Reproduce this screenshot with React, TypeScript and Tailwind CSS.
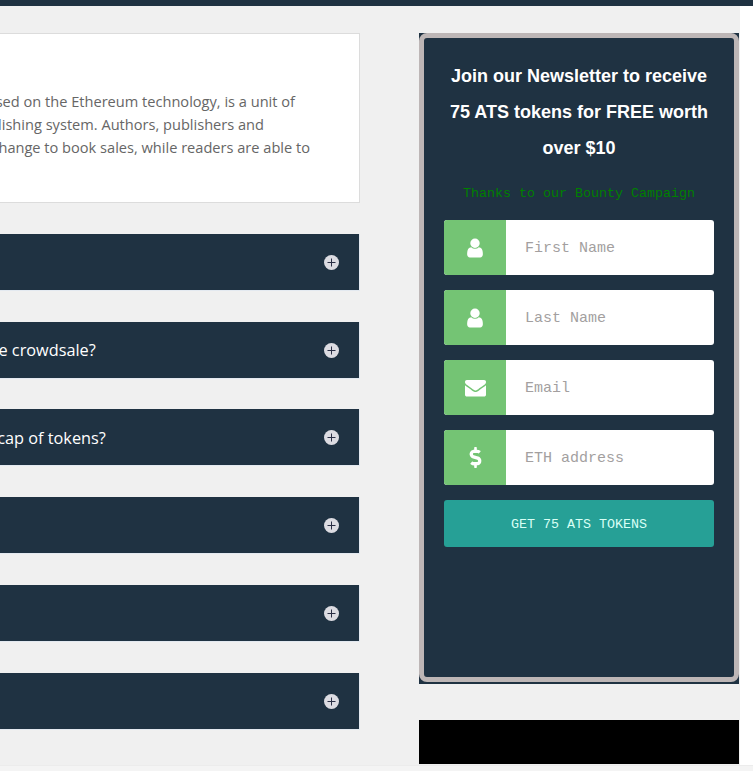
import { FaDollarSign } from "react-icons/fa";

const faqs = [
  { title: "", titleClass: "" },
  { title: "How long is the crowdsale?", titleClass: "ml-[-109px]" },
  { title: "What is the hard cap of tokens?", titleClass: "ml-[-132px]" },
  { title: "", titleClass: "" },
  { title: "", titleClass: "" },
  { title: "", titleClass: "" },
];

const UserIcon = () => (
  <svg width="22" height="22" viewBox="0 0 1792 1792" fill="currentColor">
    <path d="M1536 1399q0 109-62.5 187t-150.5 78h-854q-88 0-150.5-78t-62.5-187q0-85 8.5-160.5t31.5-152 58.5-131 94-89 134.5-34.5q131 128 313 128t313-128q76 0 134.5 34.5t94 89 58.5 131 31.5 152 8.5 160.5zm-256-887q0 159-112.5 271.5t-271.5 112.5-271.5-112.5-112.5-271.5 112.5-271.5 271.5-112.5 271.5 112.5 112.5 271.5z" />
  </svg>
);

const MailIcon = () => (
  <svg width="21" height="21" viewBox="0 0 1792 1792" fill="currentColor">
    <path d="M1792 710v794q0 66-47 113t-113 47h-1472q-66 0-113-47t-47-113v-794q44 49 101 87 362 246 497 345 57 42 92.5 65.5t94.5 48 110 24.5h2q51 0 110-24.5t94.5-48 92.5-65.5q170-123 498-345 57-39 100-87zm0-294q0 79-49 151t-122 123q-376 261-468 325-10 7-42.5 30.5t-54 38-52 32.5-57.5 27-50 9h-2q-23 0-50-9t-57.5-27-52-32.5-54-38-42.5-30.5q-91-64-262-182.5t-205-142.5q-62-42-117-115.5t-55-136.5q0-78 41.5-130t118.5-52h1472q65 0 112.5 45t47.5 115z" />
  </svg>
);

const fields = [
  { icon: <UserIcon />, placeholder: "First Name" },
  { icon: <UserIcon />, placeholder: "Last Name" },
  { icon: <MailIcon />, placeholder: "Email" },
  { icon: <FaDollarSign className="text-[21px]" />, placeholder: "ETH address" },
];

const PlusIcon = () => (
  <svg width="15" height="15" viewBox="0 0 15 15" className="shrink-0">
    <circle cx="7.5" cy="7.5" r="7.5" fill="#dcdce2" />
    <path d="M3.5 7.5h8M7.5 3.5v8" stroke="#2a2f45" strokeWidth="1" />
  </svg>
);

const App = () => {
  return (
    <div className="min-h-[771px] bg-white font-['Open_Sans',sans-serif]">
      <div className="h-[6px] bg-[#1f3242]" />

      <div className="flex h-[759px] w-[740px] items-start bg-[#f0f0f0] pt-[27px]">
        <div className="w-[360px] shrink-0 overflow-hidden">
          <div className="ml-[-10px] flex h-[170px] flex-col items-end justify-center border border-[#dcdcdc] bg-white pt-[12px] text-[14.6px] leading-[23px] text-[#666666] whitespace-nowrap">
            <p className="pr-[64px]">The ATS token, based on the Ethereum technology, is a unit of</p>
            <p className="pr-[95px]">value in a decentralised publishing system. Authors, publishers and</p>
            <p className="pr-[49px]">partners receive tokens in exchange to book sales, while readers are able to</p>
          </div>

          <div className="mt-[31px] flex flex-col gap-[30.74px]">
            {faqs.map((faq, i) => (
              <div
                key={i}
                className="flex h-[57px] items-center justify-between border-r border-b border-[#e3e9f0] bg-[#1f3242] pt-[1px] pr-[20px] text-[16.3px] text-white whitespace-nowrap"
              >
                <span className={faq.titleClass}>{faq.title}</span>
                <PlusIcon />
              </div>
            ))}
          </div>
        </div>

        <div className="ml-[59px] w-[320px] shrink-0">
          <div className="h-[651px] bg-[#1f3242]">
            <div className="h-[649px] rounded-[8px] border-[5px] border-[#bdb6b6] bg-[#1f3242] px-[20px] pt-[20px]">
              <h3 className="text-center font-['Liberation_Sans',sans-serif] text-[18px] font-bold leading-[36px] text-white">
                Join our Newsletter to receive
                <br />
                75 ATS tokens for FREE worth
                <br />
                over $10
              </h3>
              <p className="mt-[18px] text-center font-['Liberation_Mono',monospace] text-[13.33px] leading-[20px] text-[#008000]">
                Thanks to our Bounty Campaign
              </p>
              <form className="mt-[16px] flex flex-col gap-[15px]">
                {fields.map((field) => (
                  <div key={field.placeholder} className="flex h-[55px] overflow-hidden rounded-[3px] bg-white">
                    <div className="flex w-[62px] items-center justify-center bg-[#74c474] text-white">
                      {field.icon}
                    </div>
                    <input
                      placeholder={field.placeholder}
                      className="min-w-0 flex-1 pl-[19px] pt-[4px] font-['Liberation_Mono',monospace] text-[15px] outline-none placeholder:text-[#a39f9f]"
                    />
                  </div>
                ))}
                <button
                  type="button"
                  className="h-[47px] rounded-[3px] bg-[#26a096] pt-[3px] font-['Liberation_Mono',monospace] text-[13.33px] text-[#d8fff5]"
                >
                  GET 75 ATS TOKENS
                </button>
              </form>
            </div>
          </div>
          <div className="mt-[36px] h-[44px] bg-black" />
        </div>
      </div>

      <div className="h-[6px] border-t border-[#ececec] bg-[#f4f4f4]" />
    </div>
  );
};

export default App;
